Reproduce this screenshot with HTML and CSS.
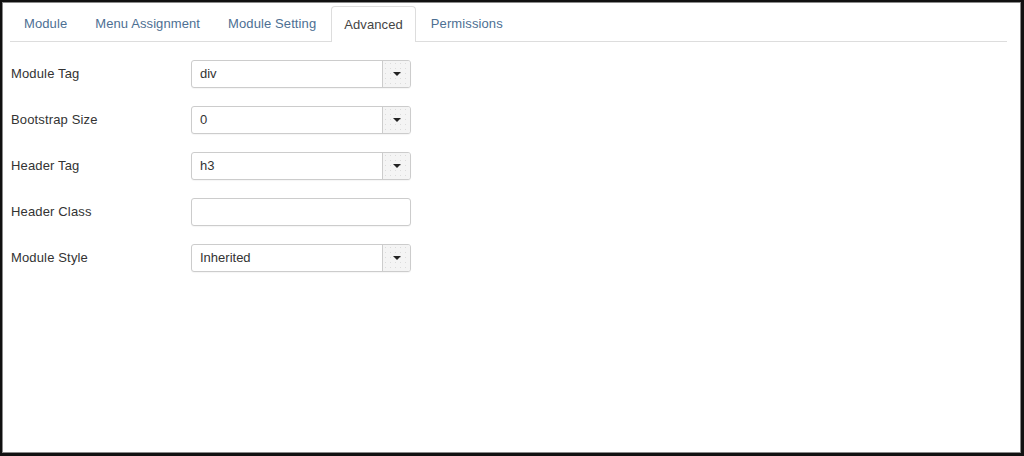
FILE: index.html
```html
<!DOCTYPE html>
<html>
<head>
<meta charset="utf-8">
<link rel="stylesheet" href="styles.css">
</head>
<body>
<div class="frame">
  <div class="inner">
    <ul class="tabs">
      <li class="tab"><span>Module</span></li>
      <li class="tab"><span>Menu Assignment</span></li>
      <li class="tab"><span>Module Setting</span></li>
      <li class="tab active"><span>Advanced</span></li>
      <li class="tab"><span>Permissions</span></li>
    </ul>
    <div class="form">
      <div class="row">
        <label class="label">Module Tag</label>
        <div class="select"><span class="value">div</span><span class="btn"><span class="caret"></span></span></div>
      </div>
      <div class="row">
        <label class="label">Bootstrap Size</label>
        <div class="select"><span class="value">0</span><span class="btn"><span class="caret"></span></span></div>
      </div>
      <div class="row">
        <label class="label">Header Tag</label>
        <div class="select"><span class="value">h3</span><span class="btn"><span class="caret"></span></span></div>
      </div>
      <div class="row">
        <label class="label">Header Class</label>
        <div class="input"></div>
      </div>
      <div class="row">
        <label class="label">Module Style</label>
        <div class="select"><span class="value">Inherited</span><span class="btn"><span class="caret"></span></span></div>
      </div>
    </div>
  </div>
</div>
</body>
</html>
```
FILE: styles.css
```css
html, body {
  margin: 0;
  padding: 0;
  background: #fff;
}
body {
  font-family: "Liberation Sans", Arial, sans-serif;
  font-size: 13px;
  color: #333;
}
.frame {
  width: 1024px;
  height: 456px;
  box-sizing: border-box;
  border-style: solid;
  border-color: #111;
  border-width: 2px 3px 3px 2px;
  background: #fff;
}
.inner {
  height: 100%;
  box-sizing: border-box;
  border: 1px solid #8a8a8a;
  padding: 3px 13px 0 7px;
}
.tabs {
  list-style: none;
  margin: 0;
  padding: 0 0 0 1px;
  display: flex;
  gap: 2px;
  border-bottom: 1px solid #ddd;
  height: 35px;
}
.tab {
  height: 35px;
  box-sizing: border-box;
  padding: 0 12px 1px;
  border: 1px solid transparent;
  border-bottom: none;
  border-radius: 4px 4px 0 0;
  display: flex;
  align-items: center;
  color: #4d6f93;
  line-height: 1;
  letter-spacing: 0.1px;
}
.tab.active {
  border-color: #ddd;
  background: #fff;
  color: #444;
  height: 36px;
  margin-bottom: -1px;
}
.form {
  padding: 18px 0 0 1px;
}
.row {
  display: flex;
  align-items: center;
  height: 28px;
  margin-bottom: 18px;
}
.label {
  width: 180px;
  color: #333;
  padding-bottom: 2px;
  letter-spacing: 0.15px;
}
.select, .input {
  width: 220px;
  height: 28px;
  box-sizing: border-box;
  border: 1px solid #ccc;
  border-radius: 3px;
  background: #fff;
  box-shadow: 0 1px 1px rgba(0,0,0,0.04);
  display: flex;
  align-items: stretch;
}
.value {
  flex: 1;
  padding-left: 8px;
  padding-bottom: 1px;
  display: flex;
  align-items: center;
  color: #333;
}
.btn {
  width: 27px;
  border-left: 1px solid #ccc;
  border-radius: 0 2px 2px 0;
  background-color: #f4f4f4;
  background-image: radial-gradient(circle, #dcdcdc 0.6px, transparent 0.9px);
  background-size: 5px 5px;
  display: flex;
  align-items: center;
  justify-content: center;
}
.caret {
  width: 0;
  height: 0;
  border-left: 4px solid transparent;
  border-right: 4px solid transparent;
  border-top: 4px solid #222;
}
```
